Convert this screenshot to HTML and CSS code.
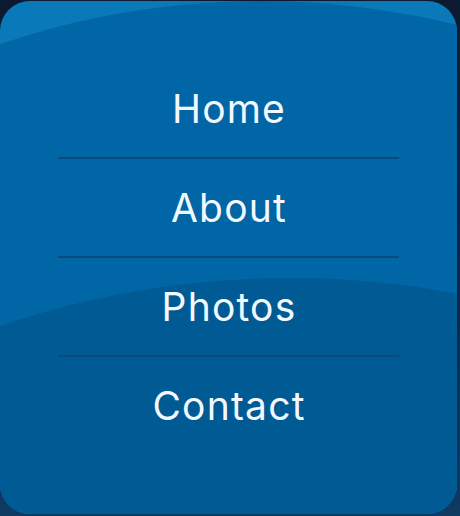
FILE: index.html
```html
<!DOCTYPE html>
<html lang="en">
<head>
<meta charset="utf-8">
<title>Menu</title>
<link rel="stylesheet" href="styles.css">
</head>
<body>
<nav class="card">
  <div class="wave wave-main"></div>
  <div class="wave wave-low"></div>
  <ul class="menu">
    <li class="menu-item"><a href="#">Home</a></li>
    <li class="menu-item"><a href="#">About</a></li>
    <li class="menu-item"><a href="#">Photos</a></li>
    <li class="menu-item"><a href="#">Contact</a></li>
  </ul>
</nav>
</body>
</html>
```
FILE: styles.css
```css
html, body {
  margin: 0;
  padding: 0;
}
body {
  width: 460px;
  height: 516px;
  background: linear-gradient(180deg, #0c1a30 0%, #0d2846 60%, #0f3a62 100%);
  overflow: hidden;
}
.card {
  position: relative;
  margin: 1px 3px 0 0;
  height: 513px;
  border-radius: 30px;
  background: #0a79b9;
  overflow: hidden;
  box-sizing: border-box;
  padding-top: 59px;
}
.wave {
  position: absolute;
  border-radius: 50%;
}
.wave-main {
  width: 1622px;
  height: 1622px;
  left: -550px;
  top: 0;
  background: #0066a5;
}
.wave-low {
  width: 1800px;
  height: 1800px;
  left: -610px;
  top: 277px;
  background: #005a94;
}
.menu {
  position: relative;
  list-style: none;
  margin: 0 58px;
  padding: 0;
}
.menu-item {
  height: 97px;
  display: flex;
  align-items: center;
  justify-content: center;
  border-bottom: 2px solid #0a4a7c;
}
.menu-item:last-child {
  border-bottom: none;
}
.menu-item a {
  color: #f3f8ff;
  text-decoration: none;
  font-family: Inter, "Open Sans", sans-serif;
  font-size: 39px;
  font-weight: 400;
  letter-spacing: 1.2px;
  line-height: 1;
  padding-left: 1px;
}
```
